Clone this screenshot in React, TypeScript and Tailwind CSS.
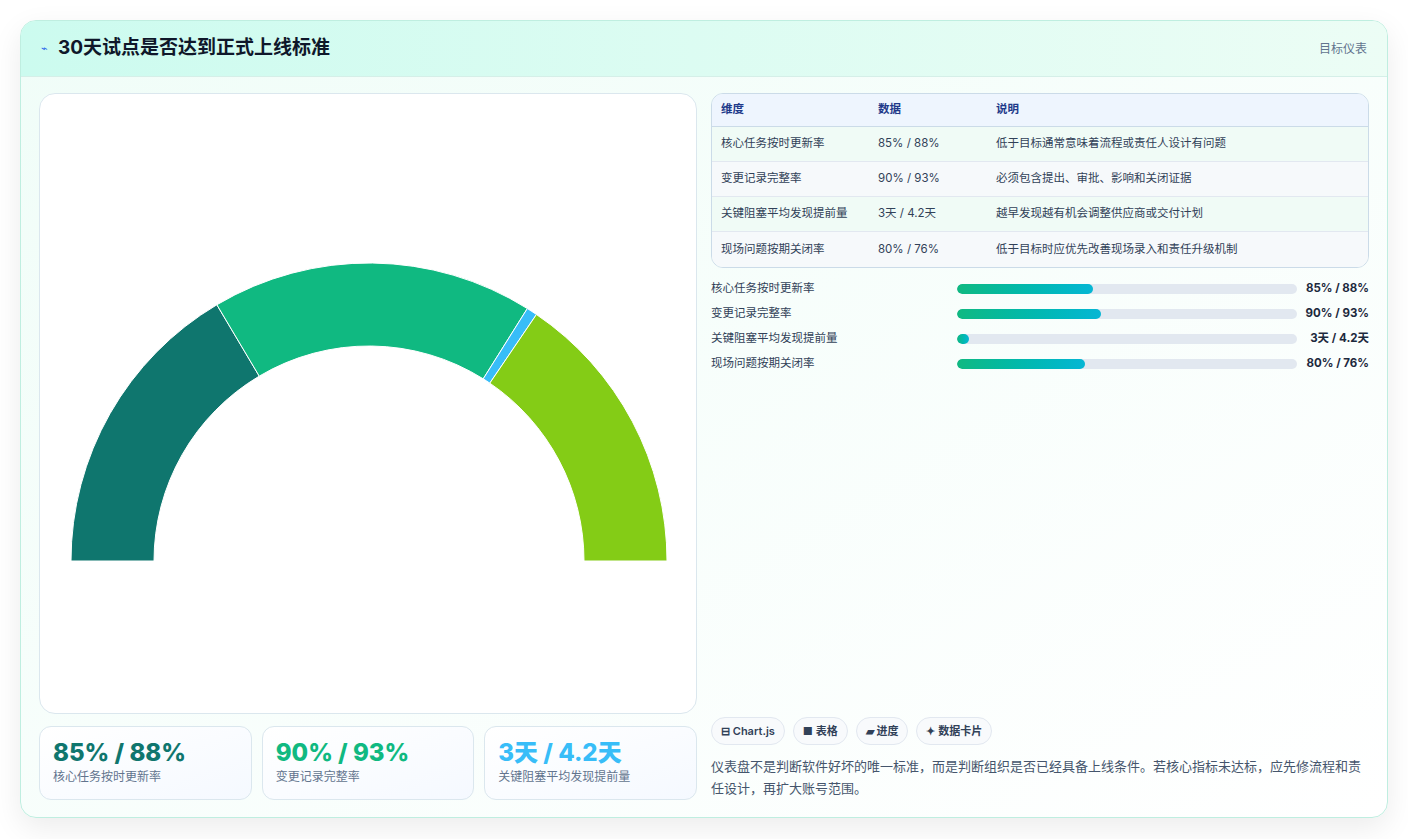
import React from "react";

const rows = [
  ["核心任务按时更新率", "85% / 88%", "低于目标通常意味着流程或责任人设计有问题", 40],
  ["变更记录完整率", "90% / 93%", "必须包含提出、审批、影响和关闭证据", 42.4],
  ["关键阻塞平均发现提前量", "3天 / 4.2天", "越早发现越有机会调整供应商或交付计划", 3.5],
  ["现场问题按期关闭率", "80% / 76%", "低于目标时应优先改善现场录入和责任升级机制", 37.6],
] as const;

function arc(cx: number, cy: number, R: number, r: number, a0: number, a1: number) {
  const p = (rad: number, a: number) => {
    const t = (a * Math.PI) / 180;
    return [cx - rad * Math.cos(t), cy - rad * Math.sin(t)];
  };
  const [x0, y0] = p(R, a0);
  const [x1, y1] = p(R, a1);
  const [x2, y2] = p(r, a1);
  const [x3, y3] = p(r, a0);
  return `M${x0} ${y0} A${R} ${R} 0 0 1 ${x1} ${y1} L${x2} ${y2} A${r} ${r} 0 0 0 ${x3} ${y3} Z`;
}

function Gauge() {
  const vals = [85, 90, 3, 80];
  const cols = ["#0f766e", "#10b981", "#38bdf8", "#84cc16"];
  const tot = vals.reduce((a, b) => a + b, 0);
  let a = 0;
  return (
    <svg width="656" height="620" viewBox="0 0 656 620">
      {vals.map((v, i) => {
        const a0 = a;
        a += (v / tot) * 180;
        return <path key={i} d={arc(329, 467, 298, 215, a0, a)} fill={cols[i]} stroke="#fff" strokeWidth="1" />;
      })}
    </svg>
  );
}

export default function App() {
  return (
    <div className="min-h-[839px] bg-white p-5" style={{ fontFamily: "Inter, 'Noto Sans CJK SC', sans-serif" }}>
      <div className="rounded-2xl border border-[#bfeee0] shadow-[0_10px_30px_rgba(0,0,0,0.08)] bg-gradient-to-br from-[#f0fdf8] to-white overflow-hidden h-[798px] flex flex-col">
        <div className="h-[56px] flex items-center justify-between px-5 bg-gradient-to-r from-[#ccfbef] to-[#ecfdf5] border-b border-[#d5efe8]">
          <div className="flex items-center gap-2.5">
            <span className="text-[#2563eb] text-[11px]">⌁</span>
            <span className="text-[19px] font-bold text-[#0f172a]">30天试点是否达到正式上线标准</span>
          </div>
          <span className="text-xs text-slate-500">目标仪表</span>
        </div>
        <div className="flex gap-[14px] px-[18px] pt-4 flex-1">
          <div className="w-[658px] flex flex-col gap-3">
            <div className="h-[621px] rounded-2xl border border-[#dbe7ee] bg-white overflow-hidden">
              <Gauge />
            </div>
            <div className="grid grid-cols-3 gap-[10px]">
              {[
                ["85% / 88%", "核心任务按时更新率", "text-[#0f766e]"],
                ["90% / 93%", "变更记录完整率", "text-[#10b981]"],
                ["3天 / 4.2天", "关键阻塞平均发现提前量", "text-[#38bdf8]"],
              ].map(([v, l, c]) => (
                <div key={l} className="h-[74px] rounded-xl border border-[#dbe7ee] bg-gradient-to-br from-white to-[#f5f9ff] px-[13px] pt-3">
                  <div className={`text-[24px] leading-7 font-extrabold ${c}`}>{v}</div>
                  <div className="text-xs text-slate-500 mt-0.5">{l}</div>
                </div>
              ))}
            </div>
          </div>
          <div className="flex-1 flex flex-col">
            <div className="rounded-xl border border-[#cbdbe8] overflow-hidden text-[11.5px] text-slate-700">
              <div className="flex h-[33px] items-center bg-[#eef5fe] border-b border-[#cbdbe8] text-[#1e3a8a] font-semibold px-[9px]">
                <div className="w-[157px]">维度</div><div className="w-[118px]">数据</div><div>说明</div>
              </div>
              {rows.map((r, i) => (
                <div key={i} className={`flex h-[35px] items-center px-[9px] ${i < 3 ? "border-b border-[#e2e8f0]" : ""} ${i % 2 ? "bg-[#f6f9fb]" : "bg-[#f0fbf6]"}`}>
                  <div className="w-[157px]">{r[0]}</div><div className="w-[118px]">{r[1]}</div><div>{r[2]}</div>
                </div>
              ))}
            </div>
            <div className="mt-[11px] flex flex-col gap-[6px]">
              {rows.map((r, i) => (
                <div key={i} className="flex items-center h-[19px] text-[11.5px]">
                  <div className="w-[246px] text-slate-700">{r[0]}</div>
                  <div className="w-[340px] h-[10px] rounded-full bg-[#e2e8f0] overflow-hidden">
                    <div className="h-full rounded-full bg-gradient-to-r from-[#10b981] to-[#06b6d4]" style={{ width: `${r[3]}%` }} />
                  </div>
                  <div className="flex-1 text-right font-bold text-slate-800">{r[1]}</div>
                </div>
              ))}
            </div>
            <div className="flex-1" />
            <div className="flex gap-2 text-[11px] font-semibold text-slate-700">
              {["⊟ Chart.js", "■ 表格", "▰ 进度", "✦ 数据卡片"].map((t) => (
                <span key={t} className="h-[28px] px-[9px] flex items-center rounded-full border border-[#e2e8f0] bg-[#f8fafc]">{t}</span>
              ))}
            </div>
            <p className="mt-[10px] mb-[18px] text-[13px] leading-[22px] text-slate-600">
              仪表盘不是判断软件好坏的唯一标准，而是判断组织是否已经具备上线条件。若核心指标未达标，应先修流程和责任设计，再扩大账号范围。
            </p>
          </div>
        </div>
      </div>
    </div>
  );
}
